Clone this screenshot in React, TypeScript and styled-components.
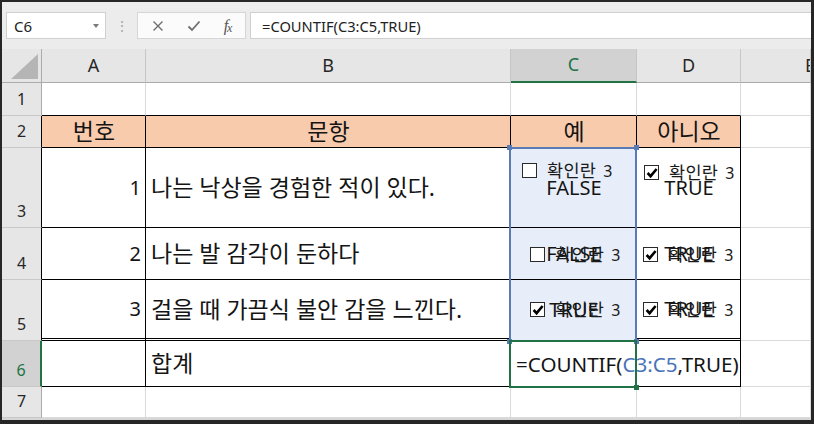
import styled, { createGlobalStyle } from 'styled-components';

const GlobalStyle = createGlobalStyle`
  html, body {
    margin: 0;
    padding: 0;
    background: #ffffff;
  }
  body {
    font-family: "Noto Sans", "Noto Sans CJK KR", sans-serif;
    color: #111;
  }
`;

const GREEN = '#217346';
const RANGE = '#5a7cb6';

const Frame = styled.div`
  width: 814px;
  height: 424px;
  box-sizing: border-box;
  border: 2px solid #262626;
  border-right-width: 3px;
  border-bottom-width: 4px;
  background: #d8d8d8;
  overflow: hidden;
  display: flex;
  flex-direction: column;
`;

const FormulaBar = styled.div`
  height: 47px;
  flex: none;
  box-sizing: border-box;
  padding: 10px 0 0 4px;
  background: #ececec;
  display: flex;
  align-items: flex-start;
`;

const NameBox = styled.div`
  width: 100px;
  height: 27px;
  box-sizing: border-box;
  border: 1px solid #d0d0d0;
  background: #fff;
  display: flex;
  align-items: center;
  justify-content: space-between;
  padding: 0 6px 0 7px;
  font-size: 15px;
  color: #222;
`;

const Caret = styled.span`
  width: 0;
  height: 0;
  border-left: 3.5px solid transparent;
  border-right: 3.5px solid transparent;
  border-top: 4px solid #7a7a7a;
`;

const Dots = styled.div`
  width: 31px;
  height: 27px;
  display: flex;
  align-items: center;
  justify-content: center;
  color: #a8a8a8;
  font-size: 14px;
`;

const ButtonBox = styled.div`
  width: 109px;
  height: 27px;
  box-sizing: border-box;
  border: 1px solid #d6d6d6;
  background: #fbfbfb;
  display: flex;
  align-items: center;
  justify-content: space-around;
  padding: 0 2px;
  color: #6e6e6e;
`;

const Fx = styled.i`
  font-family: "Liberation Serif", serif;
  font-size: 16px;
  color: #555;
  letter-spacing: -1px;
  & > span {
    font-size: 12px;
    position: relative;
    top: 1px;
  }
`;

const FormulaInput = styled.div`
  flex: 1;
  height: 27px;
  margin-left: 4px;
  box-sizing: border-box;
  border: 1px solid #d0d0d0;
  border-right: none;
  background: #fff;
  display: flex;
  align-items: center;
  padding-left: 11px;
  font-size: 14.7px;
  color: #222;
`;

const Sheet = styled.div`
  display: grid;
  grid-template-columns: 40px 104px 365px 126px 104px 70px;
  grid-template-rows: 34px 33px 32px 80px 52px 61px 46px 31px;
  background: #fff;
`;

const Placed = styled.div<{ $r: number; $c: number; $rs?: number }>`
  grid-row: ${p => p.$r} / span ${p => p.$rs ?? 1};
  grid-column: ${p => p.$c};
  box-sizing: border-box;
`;

const Corner = styled(Placed)`
  background: #e6e6e6;
  border-right: 1px solid #ababab;
  border-bottom: 1px solid #ababab;
  display: flex;
  align-items: flex-end;
  justify-content: flex-end;
  padding: 0 3px 3px 0;
`;

const ColHead = styled(Placed)<{ $sel?: boolean }>`
  background: ${p => (p.$sel ? '#d2d2d2' : '#e6e6e6')};
  color: ${p => (p.$sel ? GREEN : '#262626')};
  border-right: 1px solid #c6c6c6;
  border-bottom: ${p => (p.$sel ? `2px solid ${GREEN}` : '1px solid #ababab')};
  display: flex;
  align-items: center;
  justify-content: center;
  font-size: 18px;
  padding-bottom: 2px;
  overflow: hidden;
`;

const EdgeHead = styled(ColHead)`
  justify-content: flex-start;
  padding-left: 64px;
`;

const RowHead = styled(Placed)<{ $sel?: boolean; $edge?: boolean }>`
  background: ${p => (p.$sel ? '#d2d2d2' : '#e6e6e6')};
  color: ${p => (p.$sel ? GREEN : '#262626')};
  border-bottom: 1px solid #c8c8c8;
  border-right: ${p =>
    p.$sel ? `2px solid ${GREEN}` : p.$edge ? '1px solid #000' : '1px solid #ababab'};
  display: flex;
  align-items: flex-end;
  justify-content: center;
  font-size: 16px;
  line-height: 1;
  padding-bottom: 8px;
`;

type Border = 'table' | 'top' | 'grid';

const Cell = styled(Placed)<{
  $align?: 'left' | 'center' | 'right';
  $fill?: 'peach' | 'range';
  $border?: Border;
  $double?: boolean;
  $ko?: boolean;
}>`
  position: relative;
  background: ${p => (p.$fill === 'peach' ? '#f8cbad' : p.$fill === 'range' ? '#e7eef9' : '#fff')};
  border-right: 1px solid ${p => (p.$border === 'table' ? '#000' : '#dadada')};
  border-bottom: ${p =>
    p.$double
      ? '3px double #000'
      : p.$border === 'table' || p.$border === 'top'
        ? '1px solid #000'
        : '1px solid #dadada'};
  display: flex;
  align-items: center;
  justify-content: ${p =>
    p.$align === 'right' ? 'flex-end' : p.$align === 'center' ? 'center' : 'flex-start'};
  padding: 0 4px 0 5px;
  font-size: ${p => (p.$ko ? '23px' : '20px')};
  line-height: 1;
  white-space: nowrap;
  color: #141414;
`;

const EditCell = styled(Cell)`
  z-index: 2;
  overflow: visible;
  padding-left: 5px;
  padding-top: 1px;
  font-size: 20.6px;
`;

const Ref = styled.span`
  color: #4a74b8;
`;

const Control = styled.div<{ $x: number; $y: number }>`
  position: absolute;
  left: ${p => p.$x}px;
  top: ${p => p.$y}px;
  display: flex;
  align-items: center;
  gap: 10px;
  line-height: 1;
  color: #1a1a1a;
`;

const Label = styled.span`
  display: flex;
  align-items: center;
  gap: 7px;
`;

const LabelKo = styled.span`
  font-size: 17.5px;
  letter-spacing: 0.3px;
`;

const LabelNum = styled.span`
  font-size: 16px;
`;

const Box = styled.span`
  width: 15px;
  height: 15px;
  flex: none;
  box-sizing: border-box;
  border: 1px solid #2a2a2a;
  background: #fff;
  display: flex;
  align-items: center;
  justify-content: center;
`;

const Selection = styled(Placed)<{ $color: string }>`
  position: relative;
  z-index: 3;
  margin: -1px 0 -1px -2px;
  border: 2px solid ${p => p.$color};
  pointer-events: none;
`;

const Handle = styled.span<{ $color: string; $v: 'top' | 'bottom'; $h: 'left' | 'right' }>`
  position: absolute;
  width: 5px;
  height: 5px;
  background: ${p => p.$color};
  ${p => p.$v}: -4px;
  ${p => p.$h}: -4px;
`;

const Strip = styled.div`
  flex: 1;
  background: #d6d6d6;
`;

const CheckBox = ({ checked, x, y }: { checked: boolean; x: number; y: number }) => (
  <Control $x={x} $y={y}>
    <Box>
      {checked && (
        <svg width="12" height="12" viewBox="0 0 12 12">
          <path d="M1.6 6 L4.6 9.2 L10.6 2" fill="none" stroke="#000" strokeWidth="2.6" />
        </svg>
      )}
    </Box>
    <Label>
      <LabelKo>확인란</LabelKo>
      <LabelNum>3</LabelNum>
    </Label>
  </Control>
);

const cols = ['A', 'B', 'C', 'D'];

type Choice = { value: string; checked: boolean; x: number; y: number };

type Row = {
  n: number;
  num: string;
  text: string;
  c: Choice;
  d: Choice;
};

const rows: Row[] = [
  {
    n: 3,
    num: '1',
    text: '나는 낙상을 경험한 적이 있다.',
    c: { value: 'FALSE', checked: false, x: 11, y: 14 },
    d: { value: 'TRUE', checked: true, x: 7, y: 16 },
  },
  {
    n: 4,
    num: '2',
    text: '나는 발 감각이 둔하다',
    c: { value: 'FALSE', checked: false, x: 19, y: 18 },
    d: { value: 'TRUE', checked: true, x: 6, y: 18 },
  },
  {
    n: 5,
    num: '3',
    text: '걸을 때 가끔식 불안 감을 느낀다.',
    c: { value: 'TRUE', checked: true, x: 19, y: 21 },
    d: { value: 'TRUE', checked: true, x: 6, y: 21 },
  },
];

const App = () => {
  return (
    <>
      <GlobalStyle />
      <Frame>
        <FormulaBar>
          <NameBox>
            C6
            <Caret />
          </NameBox>
          <Dots>⋮</Dots>
          <ButtonBox>
            <svg width="12" height="12" viewBox="0 0 12 12">
              <path d="M1.5 1.5 L10.5 10.5 M10.5 1.5 L1.5 10.5" stroke="#6e6e6e" strokeWidth="1.4" />
            </svg>
            <svg width="14" height="12" viewBox="0 0 14 12">
              <path d="M1.5 6.5 L5 10 L12.5 1.5" fill="none" stroke="#6e6e6e" strokeWidth="1.8" />
            </svg>
            <Fx>
              f<span>x</span>
            </Fx>
          </ButtonBox>
          <FormulaInput>=COUNTIF(C3:C5,TRUE)</FormulaInput>
        </FormulaBar>

        <Sheet>
          <Corner $r={1} $c={1}>
            <svg width="27" height="25" viewBox="0 0 27 25">
              <polygon points="27,0 27,25 0,25" fill="#b5b5b5" />
            </svg>
          </Corner>
          {cols.map((name, i) => (
            <ColHead key={name} $r={1} $c={i + 2} $sel={name === 'C'}>
              {name}
            </ColHead>
          ))}
          <EdgeHead $r={1} $c={6}>
            E
          </EdgeHead>

          {[1, 2, 3, 4, 5, 6, 7].map(n => (
            <RowHead key={n} $r={n + 1} $c={1} $sel={n === 6} $edge={n >= 2 && n <= 5}>
              {n}
            </RowHead>
          ))}

          {/* row 1 */}
          {[2, 3, 4, 5].map(c => (
            <Cell key={`r1-${c}`} $r={2} $c={c} $border="top" />
          ))}
          <Cell $r={2} $c={6} />

          {/* row 2: headings */}
          <Cell $r={3} $c={2} $align="center" $fill="peach" $border="table" $ko>
            번호
          </Cell>
          <Cell $r={3} $c={3} $align="center" $fill="peach" $border="table" $ko>
            문항
          </Cell>
          <Cell $r={3} $c={4} $align="center" $fill="peach" $border="table" $ko>
            예
          </Cell>
          <Cell $r={3} $c={5} $align="center" $fill="peach" $border="table" $ko>
            아니오
          </Cell>
          <Cell $r={3} $c={6} />

          {rows.flatMap(row => [
            <Cell key={`a${row.n}`} $r={row.n + 1} $c={2} $align="right" $border="table" $double={row.n === 5}>
              {row.num}
            </Cell>,
            <Cell key={`b${row.n}`} $r={row.n + 1} $c={3} $border="table" $double={row.n === 5} $ko>
              {row.text}
            </Cell>,
            <Cell key={`c${row.n}`} $r={row.n + 1} $c={4} $align="center" $fill="range" $border="table">
              {row.c.value}
              <CheckBox checked={row.c.checked} x={row.c.x} y={row.c.y} />
            </Cell>,
            <Cell key={`d${row.n}`} $r={row.n + 1} $c={5} $align="center" $border="table" $double={row.n === 5}>
              {row.d.value}
              <CheckBox checked={row.d.checked} x={row.d.x} y={row.d.y} />
            </Cell>,
            <Cell key={`e${row.n}`} $r={row.n + 1} $c={6} />,
          ])}

          {/* row 6: total */}
          <Cell $r={7} $c={2} $border="table" />
          <Cell $r={7} $c={3} $border="table" $ko>
            합계
          </Cell>
          <EditCell $r={7} $c={4} $border="table">
            =COUNTIF(<Ref>C3:C5</Ref>,TRUE)
          </EditCell>
          <Cell $r={7} $c={5} $border="table" />
          <Cell $r={7} $c={6} />

          {/* row 7 */}
          {[2, 3, 4, 5, 6].map(c => (
            <Cell key={`r7-${c}`} $r={8} $c={c} />
          ))}

          <Selection $r={4} $rs={3} $c={4} $color={RANGE}>
            <Handle $color={RANGE} $v="top" $h="left" />
            <Handle $color={RANGE} $v="top" $h="right" />
            <Handle $color={RANGE} $v="bottom" $h="left" />
            <Handle $color={RANGE} $v="bottom" $h="right" />
          </Selection>
          <Selection $r={7} $c={4} $color={GREEN}>
            <Handle $color={GREEN} $v="bottom" $h="right" />
          </Selection>
        </Sheet>
        <Strip />
      </Frame>
    </>
  );
};

export default App;
